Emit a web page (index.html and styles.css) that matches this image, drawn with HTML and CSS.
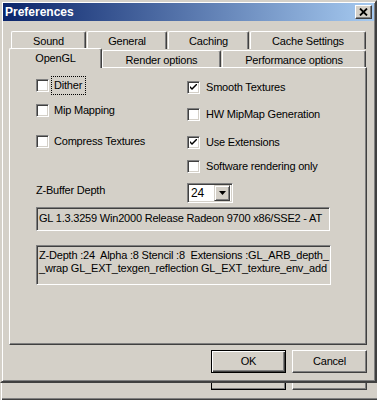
FILE: index.html
```html
<!DOCTYPE html>
<html lang="en">
<head>
    <meta charset="UTF-8">
    <meta name="viewport" content="width=device-width, initial-scale=1.0">
    <title>Preferences</title>
    <link rel="stylesheet" href="styles.css">
</head>
<body>
    <div class="window">
        <div class="titlebar">
            <span class="title">Preferences</span>
            <div class="close">
                <svg width="9" height="8" viewBox="0 0 9 8">
                    <path d="M1 0.5 L8 7.5 M8 0.5 L1 7.5" stroke="#000" stroke-width="1.8" fill="none"/>
                </svg>
            </div>
        </div>

        <div class="content">
            <div class="tabs">
                <div class="tab-row tab-row--back">
                    <div class="tab tab--sound">Sound</div>
                    <div class="tab tab--general">General</div>
                    <div class="tab tab--caching">Caching</div>
                    <div class="tab tab--cache">Cache Settings</div>
                </div>
                <div class="tab-row tab-row--front">
                    <div class="tab tab--opengl tab--selected">OpenGL</div>
                    <div class="tab tab--render">Render options</div>
                    <div class="tab tab--perf">Performance options</div>
                </div>
            </div>

            <div class="panel">
                <div class="options">
                    <div class="col col--left">
                        <div class="check check--dither">
                            <span class="box"></span>
                            <span class="label label--focus">Dither</span>
                        </div>
                        <div class="check check--mip">
                            <span class="box"></span>
                            <span class="label">Mip Mapping</span>
                        </div>
                        <div class="check check--compress">
                            <span class="box"></span>
                            <span class="label">Compress Textures</span>
                        </div>
                    </div>
                    <div class="col col--right">
                        <div class="check">
                            <span class="box">
                                <svg width="7" height="7" viewBox="0 0 7 7"><path d="M0 2 L0 4 L2 6 L7 1 L7 -1 L2 4 Z" fill="#000"/></svg>
                            </span>
                            <span class="label">Smooth Textures</span>
                        </div>
                        <div class="check check--hw">
                            <span class="box"></span>
                            <span class="label">HW MipMap Generation</span>
                        </div>
                        <div class="check check--ext">
                            <span class="box">
                                <svg width="7" height="7" viewBox="0 0 7 7"><path d="M0 2 L0 4 L2 6 L7 1 L7 -1 L2 4 Z" fill="#000"/></svg>
                            </span>
                            <span class="label">Use Extensions</span>
                        </div>
                        <div class="check check--soft">
                            <span class="box"></span>
                            <span class="label">Software rendering only</span>
                        </div>
                    </div>
                </div>

                <div class="zbuffer">
                    <span class="zbuffer__label">Z-Buffer Depth</span>
                    <div class="combo">
                        <span class="combo__value">24</span>
                        <span class="combo__button">
                            <svg width="7" height="4" viewBox="0 0 7 4"><path d="M0 0 L7 0 L3.5 4 Z" fill="#000"/></svg>
                        </span>
                    </div>
                </div>

                <div class="field field--single">GL 1.3.3259 Win2000 Release Radeon 9700 x86/SSE2 - AT</div>
                <div class="field field--multi">Z-Depth :24  Alpha :8 Stencil :8  Extensions :GL_ARB_depth_
_wrap GL_EXT_texgen_reflection GL_EXT_texture_env_add</div>
            </div>

            <div class="buttons">
                <div class="button button--default"><span>OK</span></div>
                <div class="button">Cancel</div>
            </div>
        </div>
    </div>

    <div class="ghost">
        <div class="stub stub--default"></div>
        <div class="stub"></div>
    </div>
</body>
</html>
```

FILE: styles.css
```css
*{
    margin: 0;
    padding: 0;
    box-sizing: border-box;
}
html{
    background: #d4d0c8;
}
body{
    width: 377px;
    font-family: "Liberation Sans", Arial, sans-serif;
    font-size: 11px;
    letter-spacing: -0.2px;
    color: #000;
}

/* window frame */
.window {
    height: 383px;
    padding: 1px;
    border: 2px solid;
    border-color: #d4d0c8 #404040 #404040 #d4d0c8;
    box-shadow: inset 1px 1px #fff, inset -1px -1px #808080;
    display: flex;
    flex-direction: column;
}

.titlebar {
    height: 18px;
    background: linear-gradient(to right, #0a246a, #a6caf0);
    display: flex;
    align-items: center;
    justify-content: space-between;
    padding: 0 2px 0 2px;
}
.title {
    color: #fff;
    font-weight: bold;
    font-size: 12px;
    letter-spacing: 0;
}
.close {
    width: 17px;
    height: 14px;
    background: #d4d0c8;
    border: 1px solid;
    border-color: #fff #404040 #404040 #fff;
    box-shadow: inset -1px -1px #808080;
    display: flex;
    align-items: center;
    justify-content: center;
    padding-right: 1px;
}

.content {
    flex: 1;
    padding: 10px 7px 7px 6px;
}

/* tabs */
.tabs {
    height: 36px;
}
.tab-row {
    display: flex;
}
.tab-row--back {
    height: 18px;
    padding-left: 2px;
}
.tab-row--front {
    height: 19px;
    margin-top: -1px;
    align-items: flex-end;
}
.tab {
    height: 18px;
    margin-right: 1px;
    border-top: 1px solid #fff;
    border-left: 1px solid #fff;
    border-right: 1px solid #404040;
    border-top-left-radius: 2px;
    border-top-right-radius: 2px;
    box-shadow: inset -1px 0 #808080;
    background: #d4d0c8;
    display: flex;
    align-items: center;
    justify-content: center;
    padding-top: 1px;
}
.tab-row--front .tab {
    height: 17px;
    padding-top: 1px;
}
.tab--sound { width: 75px; }
.tab--general { width: 80px; }
.tab--caching { width: 81px; }
.tab--cache { width: 116px; }
.tab--opengl { width: 93px; margin-right: 0; }
.tab--render { width: 119px; }
.tab--perf { width: 144px; }

.tab-row--front .tab--selected {
    height: 20px;
    margin-bottom: -1px;
    position: relative;
    z-index: 2;
    padding-top: 0;
    padding-bottom: 2px;
}

/* panel */
.panel {
    height: 278px;
    border: 1px solid;
    border-color: #fff #404040 #404040 #fff;
    box-shadow: inset -1px -1px #808080;
    padding: 11px 0 0 26px;
    position: relative;
}

.options {
    display: flex;
}
.col {
    display: flex;
    flex-direction: column;
}
.col--left {
    width: 151px;
}
.col--right {
    padding-top: 2px;
}

.check {
    height: 13px;
    display: flex;
    align-items: center;
    gap: 5px;
}
.check--mip { margin-top: 12px; }
.check--compress { margin-top: 18px; }
.check--hw { margin-top: 14px; }
.check--ext { margin-top: 15px; }
.check--soft { margin-top: 11px; }

.col--right .check {
    gap: 6px;
}

.box {
    width: 13px;
    height: 13px;
    flex: none;
    background: #fff;
    border: 1px solid;
    border-color: #808080 #fff #fff #808080;
    box-shadow: inset 1px 1px #404040, inset -1px -1px #d4d0c8;
    display: flex;
    align-items: center;
    justify-content: center;
}
.label {
    white-space: nowrap;
    line-height: 13px;
}
.label--focus {
    outline: 1px dotted #000;
    outline-offset: 2px;
    padding: 0 1px 0 0;
}

/* z-buffer */
.zbuffer {
    display: flex;
    align-items: flex-start;
    margin-top: 10px;
    height: 20px;
}
.zbuffer__label {
    width: 151px;
    line-height: 13px;
    padding-top: 1px;
}
.combo {
    width: 46px;
    height: 20px;
    background: #fff;
    border: 1px solid;
    border-color: #808080 #fff #fff #808080;
    box-shadow: inset 1px 1px #404040, inset -1px -1px #d4d0c8;
    padding: 2px;
    display: flex;
    justify-content: space-between;
    align-items: center;
}
.combo__value {
    padding-left: 1px;
    font-size: 12px;
}
.combo__button {
    width: 16px;
    height: 16px;
    background: #d4d0c8;
    border: 1px solid;
    border-color: #d4d0c8 #404040 #404040 #d4d0c8;
    box-shadow: inset 1px 1px #fff, inset -1px -1px #808080;
    display: flex;
    align-items: center;
    justify-content: center;
}

/* read only text fields */
.field {
    width: 294px;
    border: 1px solid;
    border-color: #808080 #fff #fff #808080;
    box-shadow: inset 1px 1px #404040, inset -1px -1px #d4d0c8;
    padding: 2px 0 0 2px;
    white-space: pre;
    line-height: 13px;
}
.field--single {
    height: 24px;
    margin-top: 4px;
    padding-top: 4px;
}
.field--multi {
    width: 295px;
    height: 40px;
    margin-top: 14px;
    padding-top: 3px;
}

/* buttons */
.buttons {
    display: flex;
    justify-content: flex-end;
    gap: 6px;
    margin-top: 5px;
}
.button {
    width: 75px;
    height: 23px;
    border: 1px solid;
    border-color: #fff #404040 #404040 #fff;
    box-shadow: inset -1px -1px #808080;
    display: flex;
    align-items: center;
    justify-content: center;
    padding-bottom: 1px;
}
.button--default {
    border-color: #000;
    box-shadow: inset 1px 1px #fff, inset -1px -1px #404040, inset -2px -2px #808080;
}

/* leftover repaint strip under the window */
.ghost {
    height: 17px;
    border-left: 1px solid #d4d0c8;
    box-shadow: inset 1px 0 #fff, inset 0 -1px #404040, inset 0 -2px #808080;
    display: flex;
    justify-content: flex-end;
    gap: 6px;
    padding-right: 10px;
}
.stub {
    width: 75px;
    height: 7px;
    border-left: 1px solid #fff;
    border-right: 1px solid #404040;
    border-bottom: 1px solid #404040;
    box-shadow: inset -1px -1px #808080;
}
.stub--default {
    border-color: #000;
}
```
